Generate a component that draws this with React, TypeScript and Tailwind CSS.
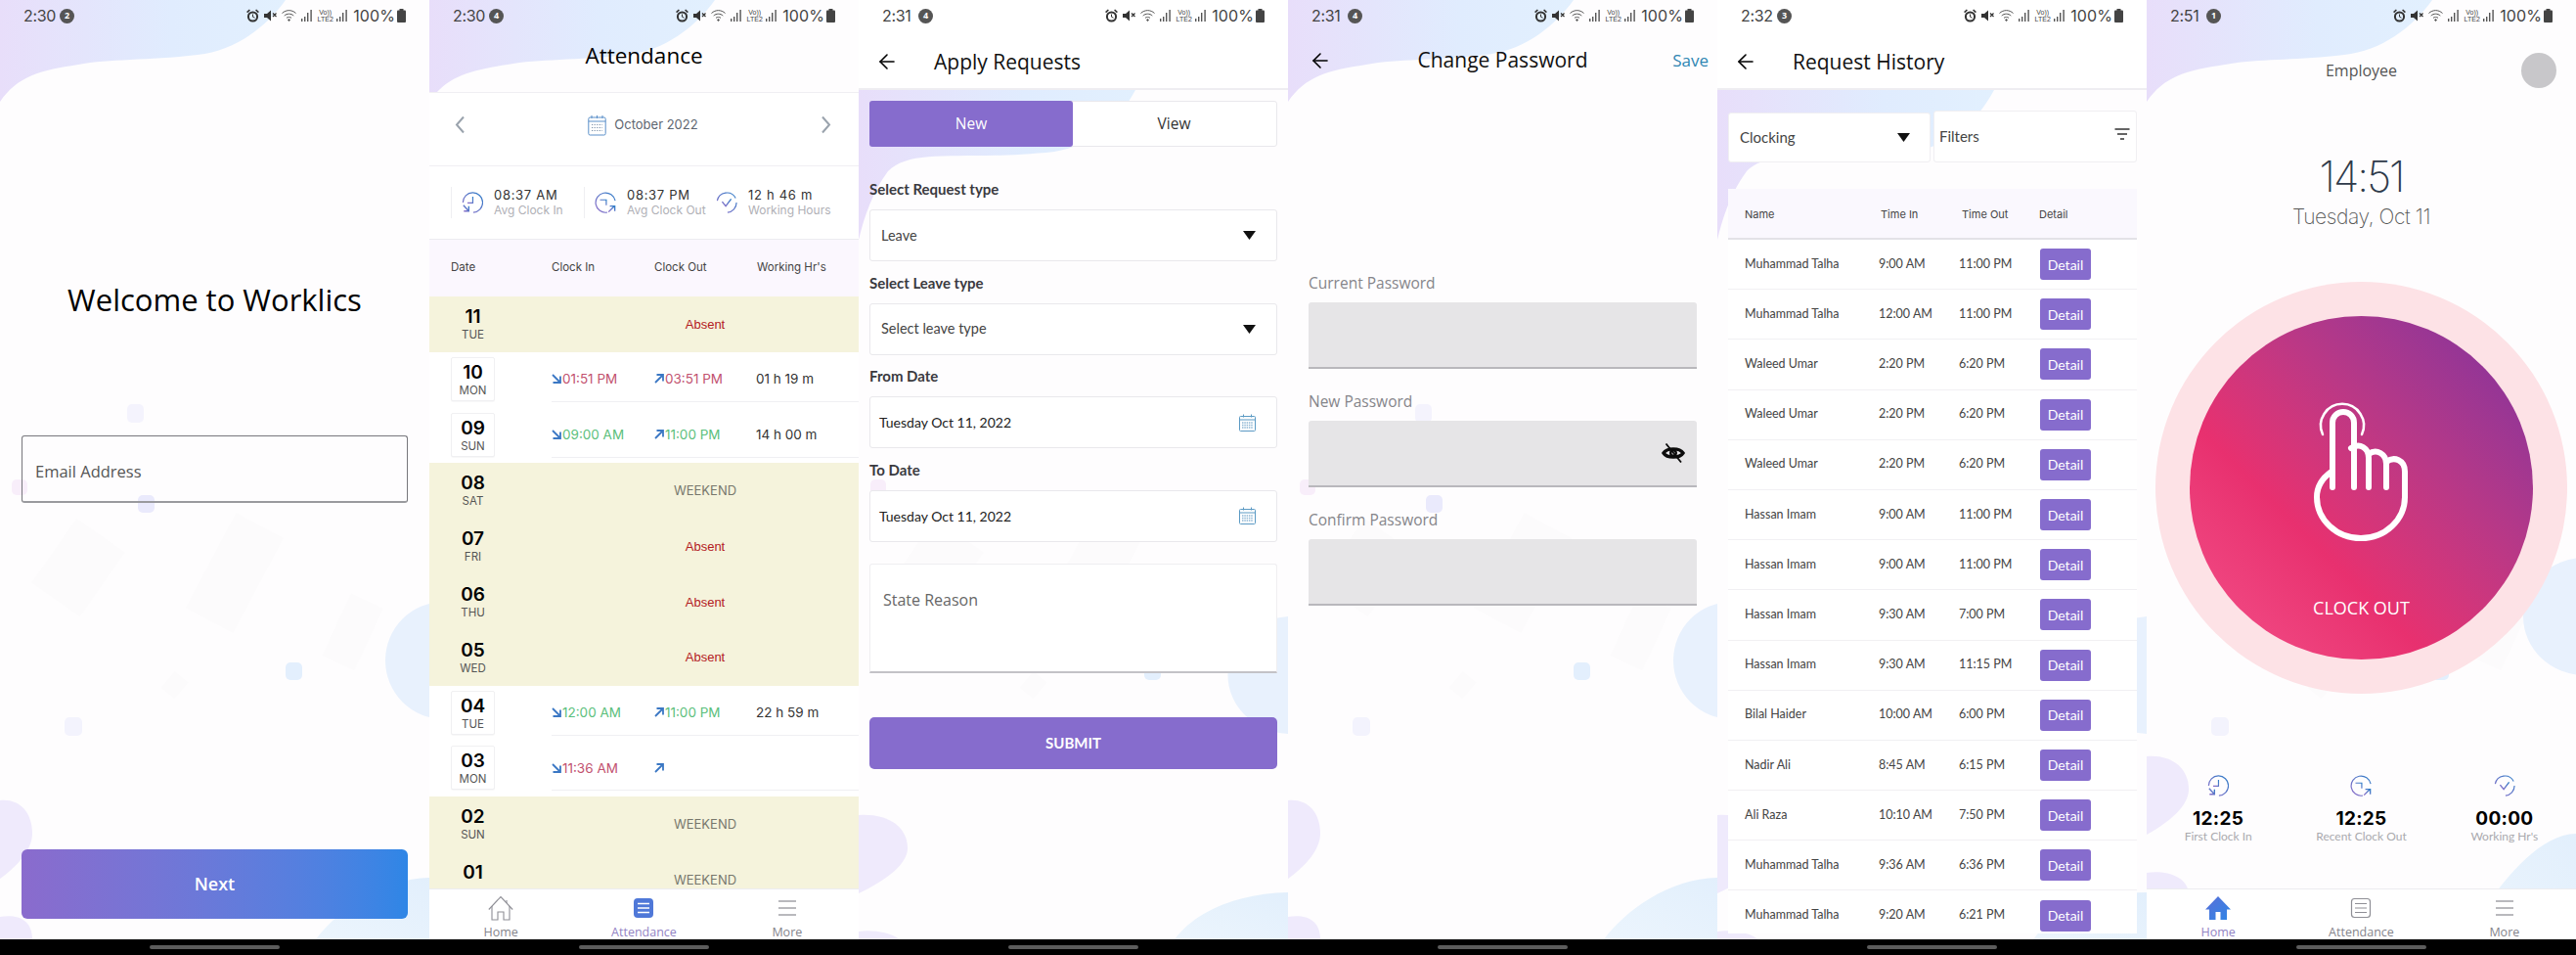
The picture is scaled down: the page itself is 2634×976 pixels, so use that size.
import React from 'react';
import { ArrowLeft } from 'lucide-react';

const OPEN = "font-['Open_Sans',sans-serif]";
const MONT = "font-['Inter',sans-serif]";
const LATO = "font-['Lato',sans-serif]";

// backdrop art behind every screen, shapes differ a little between screens
const Backdrop: React.FC<{ under?: boolean; dy?: number; cx?: number; blobX?: number }> = ({ under = false, dy = 0, cx = 0, blobX = 33 }) => (
  <svg className="absolute inset-0" width="439" height="960" viewBox="0 0 439 960">
    <defs>
      <linearGradient id="blobTop" x1="0" y1="0" x2="1" y2="0">
        <stop offset="0" stopColor="#e8defa" />
        <stop offset="0.6" stopColor="#e0ecfe" />
        <stop offset="1" stopColor="#e2f0fe" />
      </linearGradient>
      <linearGradient id="blobBR" x1="0" y1="1" x2="1" y2="0">
        <stop offset="0" stopColor="#ecf5fd" />
        <stop offset="1" stopColor="#e2effc" />
      </linearGradient>
    </defs>
    {under ? (
      <path d="M0 92 H283 C265 125 240 148 200 155 C110 165 55 150 30 175 C15 195 6 220 0 245 Z" fill="url(#blobTop)" />
    ) : (
      <path d="M0 0 H292 C272 28 240 52 202 56 C150 62 112 60 80 66 C40 72 18 78 0 104 Z" fill="url(#blobTop)" />
    )}
    <g fill="#fcfbfc">
      <rect x="50" y="540" width="60" height="80" transform="rotate(35 80 580)" />
      <rect x="215" y="530" width="55" height="110" transform="rotate(28 240 580)" />
      <rect x="345" y="610" width="36" height="70" transform="rotate(25 360 640)" />
      <rect x="170" y="690" width="18" height="22" transform="rotate(40 180 700)" />
    </g>
    <rect x="130" y="413" width="17" height="19" rx="5" fill="#f4f3fd" />
    <rect x="141" y="506" width="17" height="18" rx="5" fill="#eaeafc" />
    <rect x="292" y={677} width="17" height="18" rx="5" fill="#e3effd" />
    <rect x="66" y="733" width="18" height="19" rx="5" fill="#f3f3fd" />
    <rect x="12" y="490" width="16" height="16" rx="5" fill="#f8eefa" />
    <ellipse cx={454 - cx} cy={675 + dy} rx={60 + cx / 2} ry="60" fill="#e8f1fd" />
    <path d={`M0 ${818 + dy} C${blobX * 0.6} ${816 + dy} ${blobX} ${830 + dy} ${blobX} ${852 + dy} C${blobX} ${868 + dy} ${blobX * 0.55} ${885 + dy} 0 ${898 + dy} Z`} fill="#efeafc" />
    <path d={`M0 ${937 + dy} C18 ${934 + dy} ${blobX} ${940 + dy} ${blobX} ${960 + dy} L${blobX} 960 H0 Z`} fill="#efeafc" />
    <path d={`M323 960 C345 930 390 ${898 + dy} 439 ${897 + dy} V960 Z`} fill="url(#blobBR)" />
  </svg>
);

const Shot: React.FC<{ bg?: React.ReactNode; children: React.ReactNode }> = ({ bg, children }) => (
  <div className="w-[439px] h-[976px] flex flex-col bg-black overflow-hidden shrink-0">
    <div className="relative h-[960px] bg-[#fefdfe] overflow-hidden">
      {bg ?? <Backdrop />}
      <div className="relative h-full flex flex-col">{children}</div>
    </div>
    <div className="h-[16px] flex items-center justify-center">
      <div className="w-[133px] h-[4px] rounded-full bg-[#5c5c5c]" />
    </div>
  </div>
);

const Bars = () => (
  <svg width="12" height="14" viewBox="0 0 12 14" fill="#555">
    <rect x="0" y="10" width="1.4" height="3" />
    <rect x="3" y="8" width="1.4" height="5" />
    <rect x="6" y="4" width="1.4" height="9" />
    <rect x="9.4" y="1" width="1.4" height="12" />
  </svg>
);

const StatusBar: React.FC<{ time: string; badge: string }> = ({ time, badge }) => (
  <div className="h-[32px] shrink-0 flex items-center justify-between pl-[24px] pr-[24px] text-[#444]">
    <div className="flex items-center gap-[6px]">
      <span className={`${MONT} text-[16px] w-[31px] tracking-[-0.3px]`}>{time}</span>
      <span className="w-[15px] h-[15px] rounded-full bg-[#555] text-white text-[9px] font-bold flex items-center justify-center">{badge}</span>
    </div>
    <div className="flex items-center">
      <svg width="13" height="14" viewBox="0 0 13 14" fill="#333">
        <circle cx="6.5" cy="8" r="4.6" fill="none" stroke="#333" strokeWidth="2" />
        <path d="M0.6 3.6L3.4 1M12.4 3.6L9.6 1" stroke="#333" strokeWidth="1.6" />
        <path d="M6.5 5.5V8.2L8.5 9.2" stroke="#333" strokeWidth="1" fill="none" />
      </svg>
      <svg className="ml-[5px]" width="13" height="14" viewBox="0 0 13 14" fill="#333">
        <path d="M0 5H3L7 1.5V12.5L3 9H0Z" />
        <path d="M9 4.5L12.5 8M12.5 4.5L9 8" stroke="#333" strokeWidth="1.2" />
      </svg>
      <svg className="ml-[5px]" width="16" height="14" viewBox="0 0 16 14" fill="none" stroke="#555" strokeWidth="1">
        <path d="M0.5 4.5C4.5 0.7 10.5 0.7 14.5 4.5" />
        <path d="M2.7 7C5.5 4.6 9.5 4.6 12.3 7" />
        <path d="M5 9.3C6.5 8.2 8.5 8.2 10 9.3" />
        <circle cx="7.5" cy="11.5" r="0.8" fill="#555" />
      </svg>
      <span className="ml-[4px]"><Bars /></span>
      <span className="ml-[5px] w-[15px] flex flex-col items-center text-[7px] leading-[7px] text-[#444] font-['Liberation_Sans',sans-serif]">
        <span>Vo))</span>
        <span>LTE2</span>
      </span>
      <span className="ml-[4px]"><Bars /></span>
      <span className={`${MONT} ml-[5px] text-[16px] tracking-[0.1px]`}>100%</span>
      <svg className="ml-[2px]" width="9" height="14" viewBox="0 0 9 14" fill="#444">
        <rect x="2.5" y="0" width="4" height="2" />
        <rect x="0" y="1.5" width="9" height="12.5" rx="1" />
      </svg>
    </div>
  </div>
);

const ArcGrad = ({ id }: { id: string }) => (
  <defs>
    <linearGradient id={id} x1="0" y1="1" x2="1" y2="0">
      <stop offset="0" stopColor="#8f6cc8" />
      <stop offset="1" stopColor="#2f7fc8" />
    </linearGradient>
  </defs>
);

const ClockInIcon = () => (
  <svg width="22" height="22" viewBox="0 0 24 24" fill="none" stroke="url(#gIn)" strokeWidth="1.3">
    <ArcGrad id="gIn" />
    <path d="M1.5 12A11 11 0 1 1 13 23" />
    <path d="M12.5 5.5V12.5H6.5" />
    <path d="M2 15L8 21.5M8 16V21.5H2.5" strokeWidth="1.5" />
  </svg>
);

const ClockOutIcon = () => (
  <svg width="22" height="22" viewBox="0 0 24 24" fill="none" stroke="url(#gOut)" strokeWidth="1.3">
    <ArcGrad id="gOut" />
    <path d="M23 10A11 11 0 1 0 14 23" />
    <path d="M6 9H13V15" />
    <path d="M15.5 22.5L22 16M17 16H22.5V21.5" strokeWidth="1.5" />
  </svg>
);

const CheckIcon = () => (
  <svg width="22" height="22" viewBox="0 0 24 24" fill="none" stroke="url(#gChk)" strokeWidth="1.3">
    <ArcGrad id="gChk" />
    <path d="M1.5 10A11 11 0 0 1 22 7M23 12A11 11 0 0 1 13 23" />
    <path d="M7 11L11 16L17 8" strokeWidth="1.5" />
  </svg>
);

const HomeOutline = () => (
  <svg width="26" height="26" viewBox="0 0 26 26" fill="none" stroke="#8f8f96" strokeWidth="1.1">
    <path d="M0.8 14.5L13 1.5L25.2 14.5" />
    <path d="M4 11V25H10V17H16V25H22V11" />
    <path d="M19 5V8" />
  </svg>
);

const HomeFilled = () => (
  <svg width="26" height="26" viewBox="0 0 26 26">
    <defs>
      <linearGradient id="gHome" x1="0" y1="0" x2="1" y2="1">
        <stop offset="0" stopColor="#5b6fd8" />
        <stop offset="1" stopColor="#2e86e6" />
      </linearGradient>
    </defs>
    <path d="M13 1L26 14.5H22V25H15.5V17H10.5V25H4V14.5H0Z" fill="url(#gHome)" />
  </svg>
);

const DocIcon: React.FC<{ active?: boolean }> = ({ active }) => (
  <svg width="26" height="26" viewBox="0 0 26 26" fill="none">
    {active ? (
      <>
        <rect x="3" y="3" width="20" height="20" rx="4" fill="#4f78d8" />
        <path d="M7 8.5H19M7 13H19M7 17.5H19" stroke="#fff" strokeWidth="1.6" />
      </>
    ) : (
      <>
        <rect x="3.5" y="3.5" width="19" height="19" rx="3" stroke="#8f8f96" strokeWidth="1.2" />
        <path d="M7 8.5H19M7 13H19M7 17.5H19" stroke="#8f8f96" strokeWidth="1.1" />
      </>
    )}
  </svg>
);

const MenuIcon = () => (
  <svg width="26" height="26" viewBox="0 0 26 26" fill="none" stroke="#a3a3a8" strokeWidth="1.3">
    <path d="M4 6H22M4 13H22M4 20H22" />
  </svg>
);

const BottomNav: React.FC<{ active: 'home' | 'attendance' }> = ({ active }) => (
  <div className="mt-auto h-[52px] shrink-0 grid grid-cols-3 bg-white border-t border-[#ececf0] pt-[6px] relative">
    {[
      { key: 'home', label: 'Home', icon: active === 'home' ? <HomeFilled /> : <HomeOutline /> },
      { key: 'attendance', label: 'Attendance', icon: <DocIcon active={active === 'attendance'} /> },
      { key: 'more', label: 'More', icon: <MenuIcon /> },
    ].map((item) => (
      <div key={item.key} className="flex flex-col items-center">
        {item.icon}
        <span className={`${OPEN} mt-[5px] text-[12.5px] leading-[14px] ${item.key === active ? 'text-[#9384c4]' : 'text-[#85858c]'}`}>
          {item.label}
        </span>
      </div>
    ))}
  </div>
);

const CornerArrow: React.FC<{ out?: boolean }> = ({ out }) => (
  <svg className="mr-[1px]" width="10" height="10" viewBox="0 0 10 10" fill="none" stroke="#3b78c4" strokeWidth="1.8">
    {out ? <path d="M1 9L8.5 1.5M2.5 1H9V7.5" /> : <path d="M1 1L8.5 8.5M1.5 9H9V2.5" />}
  </svg>
);

type DayRow = { d: string; w: string; note?: string; tin?: string; tout?: string; hrs?: string; tone?: string };

const DAYS: DayRow[] = [
  { d: '11', w: 'TUE', note: 'Absent' },
  { d: '10', w: 'MON', tin: '01:51 PM', tout: '03:51 PM', hrs: '01 h 19 m', tone: 'red' },
  { d: '09', w: 'SUN', tin: '09:00 AM', tout: '11:00 PM', hrs: '14 h 00 m', tone: 'green' },
  { d: '08', w: 'SAT', note: 'WEEKEND' },
  { d: '07', w: 'FRI', note: 'Absent' },
  { d: '06', w: 'THU', note: 'Absent' },
  { d: '05', w: 'WED', note: 'Absent' },
  { d: '04', w: 'TUE', tin: '12:00 AM', tout: '11:00 PM', hrs: '22 h 59 m', tone: 'green' },
  { d: '03', w: 'MON', tin: '11:36 AM', tout: '', hrs: '', tone: 'red' },
  { d: '02', w: 'SUN', note: 'WEEKEND' },
  { d: '01', w: '', note: 'WEEKEND' }, // day label sits behind the tab bar
];

const DayCell: React.FC<{ row: DayRow; boxed?: boolean }> = ({ row, boxed }) => (
  <div className={`w-[45px] h-[45px] flex flex-col items-center justify-start pt-[4px] ${boxed ? 'bg-white border border-[#f0f0f2] rounded-[2px] shadow-[0_1px_1px_rgba(0,0,0,0.03)]' : ''}`}>
    <span className={`${MONT} text-[19px] leading-[22px] font-semibold text-black`}>{row.d}</span>
    <span className={`${MONT} text-[11.5px] leading-[15px] text-[#555]`}>{row.w}</span>
  </div>
);

const AttendanceRow: React.FC<{ row: DayRow }> = ({ row }) => {
  if (row.note) {
    return (
      <div className="h-[56.8px] flex items-center bg-[#f5f3dc] pl-[22px]">
        <div className="w-[103px]"><DayCell row={row} /></div>
        <div className={`flex-1 text-center text-[13px] ${row.note === 'Absent' ? "text-[#b3201f] font-['Liberation_Sans',sans-serif]" : `text-[#77776c] ${MONT}`}`}>
          {row.note}
        </div>
      </div>
    );
  }
  const tone = row.tone === 'red' ? 'text-[#c2526f]' : 'text-[#5cc07c]';
  return (
    <div className="h-[56.8px] flex items-start bg-white pl-[22px] pt-[5px]">
      <div className="w-[103px]"><DayCell row={row} boxed /></div>
      <div className={`${MONT} flex-1 h-[46px] flex items-center border-b border-[#f0f0f3] text-[13.5px]`}>
        <span className={`w-[105px] flex items-center ${tone}`}><CornerArrow />{row.tin}</span>
        <span className={`w-[104px] flex items-center ${tone}`}><CornerArrow out />{row.tout}</span>
        <span className="text-[#333]">{row.hrs}</span>
      </div>
    </div>
  );
};

const AttendanceStat: React.FC<{ icon: React.ReactNode; value: string; label: string; className: string }> = ({ icon, value, label, className }) => (
  <div className={`flex items-center ${className}`}>
    {icon}
    <div className={`${MONT} ml-[11px]`}>
      <div className="text-[13px] leading-[16px] tracking-[0.7px] text-[#333]">{value}</div>
      <div className="text-[12px] leading-[16px] text-[#b0b0b6]">{label}</div>
    </div>
  </div>
);

const MonthIcon = () => (
  <svg width="19" height="22" viewBox="0 0 19 22" fill="none" stroke="#5a8fc9" strokeWidth="1">
    <rect x="0.8" y="3" width="17.4" height="18" rx="1.5" />
    <path d="M0.8 7H18.2M4 1V4M9.5 1V4M15 1V4" />
    <path d="M4 10.5H15M4 13.5H15M4 16.5H15" strokeDasharray="1.2 1.4" stroke="#7a8fa8" />
  </svg>
);

const AttendanceScreen = () => (
  <Shot>
    <StatusBar time="2:30" badge="4" />
    <div className={`${OPEN} h-[62px] shrink-0 flex items-center justify-center pb-[12px] text-[22.5px] text-black`}>Attendance</div>
    <div className="relative h-[76px] shrink-0 bg-white border-y border-[#f0eff3] flex justify-between pl-[26px] pr-[28px] pt-[22px]">
      <svg className="mt-[1px]" width="11" height="19" viewBox="0 0 11 19" fill="none" stroke="#9aa3ad" strokeWidth="2"><path d="M9 1.5L2 9.5L9 17.5" /></svg>
      <div className="flex items-start gap-[8px]">
        <MonthIcon />
        <span className={`${MONT} text-[13px] leading-[20px] text-[#5d6570]`}>October 2022</span>
      </div>
      <svg className="mt-[1px]" width="11" height="19" viewBox="0 0 11 19" fill="none" stroke="#9aa3ad" strokeWidth="2"><path d="M2 1.5L9 9.5L2 17.5" /></svg>
    </div>
    <div className="h-[75px] shrink-0 bg-white border-b border-[#ececf0] flex items-center pl-[22px]">
      <AttendanceStat className="w-[136px] border-l border-[#efeff2] pl-[10px]" icon={<ClockInIcon />} value="08:37 AM" label="Avg Clock In" />
      <AttendanceStat className="w-[125px] border-l border-[#efeff2] pl-[10px]" icon={<ClockOutIcon />} value="08:37 PM" label="Avg Clock Out" />
      <AttendanceStat className="pl-[10px]" icon={<CheckIcon />} value="12 h 46 m" label="Working Hours" />
    </div>
    <div className={`${MONT} h-[58px] shrink-0 bg-[#fbf7fe] flex items-center pl-[22px] text-[11.5px] text-[#444]`}>
      <span className="w-[103px]">Date</span>
      <span className="w-[105px]">Clock In</span>
      <span className="w-[105px]">Clock Out</span>
      <span>Working Hr's</span>
    </div>
    <div className="flex-1 min-h-0 overflow-hidden">
      {DAYS.map((row) => <AttendanceRow key={row.d} row={row} />)}
    </div>
    <BottomNav active="attendance" />
  </Shot>
);

const LoginScreen = () => (
  <Shot>
    <StatusBar time="2:30" badge="2" />
    <h1 className={`${OPEN} mt-[252px] text-center text-[31px] leading-[44px] text-black`}>Welcome to Worklics</h1>
    <div className="mx-[22px] mt-[117px] h-[69px] border border-[#77777c] border-b-2 border-b-[#9a9a9e] rounded-[3px] flex items-center pl-[13px] pt-[6px]">
      <span className={`${OPEN} text-[16.5px] text-[#555]`}>Email Address</span>
    </div>
    <button className={`${OPEN} mx-[22px] mt-[354px] h-[71px] rounded-[6px] bg-gradient-to-r from-[#8a6bcd] to-[#2e86e6] text-white text-[18px] font-semibold`}>
      Next
    </button>
  </Shot>
);

const Caret = () => (
  <svg width="13" height="9" viewBox="0 0 13 9" fill="#111"><path d="M0 0H13L6.5 9Z" /></svg>
);

const FormCalendar = () => (
  <svg width="17" height="18" viewBox="0 0 17 18" fill="none" stroke="#5b9ac4" strokeWidth="1">
    <rect x="0.5" y="2.5" width="16" height="15" rx="1" />
    <path d="M0.5 6H16.5M4.5 0.5V3.5M12.5 0.5V3.5" />
    <path d="M3 9H14M3 11.5H14M3 14H14" strokeWidth="1.4" strokeDasharray="1.5 0.8" stroke="#8fb7d4" />
  </svg>
);

const Field: React.FC<{ label: string; first?: boolean; children: React.ReactNode }> = ({ label, first, children }) => (
  <>
    <div className={`${LATO} ${first ? 'mt-[34px]' : 'mt-[12.6px]'} h-[20px] text-[15px] leading-[18px] font-bold text-[#3a3a3f]`}>{label}</div>
    <div className="mt-[10px] h-[53px] bg-white border border-[#e9e8ec] rounded-[3px] flex items-center justify-between pl-[11px] pr-[21px]">
      {children}
    </div>
  </>
);

const ScreenHeader: React.FC<{ time: string; badge: string; title: string }> = ({ time, badge, title }) => (
  <div className="h-[92px] shrink-0 bg-white border-b-2 border-[#eeedf1]">
    <StatusBar time={time} badge={badge} />
    <div className="flex items-center pl-[17px] mt-[19px]">
      <ArrowLeft size={24} strokeWidth={1.6} className="text-black" />
      <span className={`${OPEN} ml-[36px] text-[21px] leading-[24px] text-[#111]`}>{title}</span>
    </div>
  </div>
);

const RequestsScreen = () => (
  <Shot bg={<Backdrop under dy={15} cx={11} blobX={50} />}>
    <ScreenHeader time="2:31" badge="4" title="Apply Requests" />
    <div className="px-[11px]">
      <div className={`${OPEN} mt-[11px] h-[47px] flex bg-white border border-[#e9e8ec] rounded-[3px] text-[15.5px]`}>
        <div className="w-[208px] -m-px bg-[#866ccd] text-white rounded-[3px] flex items-center justify-center">New</div>
        <div className="flex-1 flex items-center justify-center text-[#333]">View</div>
      </div>
      <Field label="Select Request type" first>
        <span className={`${LATO} text-[14.5px] text-[#444]`}>Leave</span>
        <Caret />
      </Field>
      <Field label="Select Leave type">
        <span className={`${LATO} text-[14.5px] text-[#444]`}>Select leave type</span>
        <Caret />
      </Field>
      <Field label="From Date">
        <span className={`${LATO} -ml-[2px] text-[14px] text-[#222]`}>Tuesday Oct 11, 2022</span>
        <FormCalendar />
      </Field>
      <Field label="To Date">
        <span className={`${LATO} -ml-[2px] text-[14px] text-[#222]`}>Tuesday Oct 11, 2022</span>
        <FormCalendar />
      </Field>
      <div className="mt-[22px] h-[112px] bg-white border border-[#efeef1] border-b-2 border-b-[#c3c2c7] rounded-t-[3px] pl-[13px] pt-[24px]">
        <span className={`${OPEN} text-[16px] leading-[24px] text-[#666]`}>State Reason</span>
      </div>
      <button className={`${LATO} mt-[45px] w-full h-[53px] rounded-[5px] bg-[#866ccd] text-white text-[15px] font-bold`}>SUBMIT</button>
    </div>
  </Shot>
);

const PasswordField: React.FC<{ label: string; className: string; eye?: boolean }> = ({ label, className, eye }) => (
  <>
    <div className={`${OPEN} ${className} h-[24px] text-[15.5px] leading-[24px] text-[#85858a]`}>{label}</div>
    <div className="mt-[8px] h-[68px] bg-[#e6e5e7] border-b-2 border-[#b9b8bc] rounded-t-[3px] flex items-center justify-end pr-[12px]">
      {eye && (
        <svg width="24" height="20" viewBox="0 0 24 20" fill="none" stroke="#0c0c0c">
          <path d="M2 10C5.5 4.5 18.5 4.5 22 10C18.5 15.5 5.5 15.5 2 10Z" strokeWidth="3.4" />
          <circle cx="12" cy="10" r="2.8" strokeWidth="2.4" />
          <path d="M4.5 0.5L20 19.5" strokeWidth="1.8" />
        </svg>
      )}
    </div>
  </>
);

const PasswordScreen = () => (
  <Shot>
    <StatusBar time="2:31" badge="4" />
    <div className="h-[60px] shrink-0 grid grid-cols-[1fr_auto_1fr] items-center">
      <ArrowLeft size={24} strokeWidth={1.6} className="ml-[21px] text-black" />
      <span className={`${OPEN} text-[21px] text-[#111]`}>Change Password</span>
      <span className={`${OPEN} justify-self-end pr-[9px] text-[17px] text-[#2f86b3]`}>Save</span>
    </div>
    <div className="px-[21px]">
      <PasswordField label="Current Password" className="mt-[185px]" />
      <PasswordField label="New Password" className="mt-[21px]" eye />
      <PasswordField label="Confirm Password" className="mt-[21px]" />
    </div>
  </Shot>
);

const REQUESTS = [
  ['Muhammad Talha', '9:00 AM', '11:00 PM'],
  ['Muhammad Talha', '12:00 AM', '11:00 PM'],
  ['Waleed Umar', '2:20 PM', '6:20 PM'],
  ['Waleed Umar', '2:20 PM', '6:20 PM'],
  ['Waleed Umar', '2:20 PM', '6:20 PM'],
  ['Hassan Imam', '9:00 AM', '11:00 PM'],
  ['Hassan Imam', '9:00 AM', '11:00 PM'],
  ['Hassan Imam', '9:30 AM', '7:00 PM'],
  ['Hassan Imam', '9:30 AM', '11:15 PM'],
  ['Bilal Haider', '10:00 AM', '6:00 PM'],
  ['Nadir Ali', '8:45 AM', '6:15 PM'],
  ['Ali Raza', '10:10 AM', '7:50 PM'],
  ['Muhammad Talha', '9:36 AM', '6:36 PM'],
  ['Muhammad Talha', '9:20 AM', '6:21 PM'],
];

const HistoryScreen = () => (
  <Shot bg={<Backdrop under dy={15} cx={11} blobX={50} />}>
    <ScreenHeader time="2:32" badge="3" title="Request History" />
    <div className="pl-[11px] pr-[10px]">
      <div className="flex items-end gap-[3px] mt-[21px]">
        <div className="w-[207px] h-[51px] bg-white border border-[#f0eff2] rounded-[3px] flex items-center justify-between pl-[11px] pr-[20px]">
          <span className={`${LATO} text-[15px] text-[#444]`}>Clocking</span>
          <Caret />
        </div>
        <div className="flex-1 h-[53px] bg-white border border-[#f0eff2] rounded-[3px] flex items-center justify-between pl-[5px] pr-[6px]">
          <span className={`${LATO} text-[15px] text-[#444]`}>Filters</span>
          <svg className="mb-[6px]" width="16" height="14" viewBox="0 0 16 14" fill="none" stroke="#333" strokeWidth="1.4">
            <path d="M0.5 2H15.5M3 7H13M6 12H10" />
          </svg>
        </div>
      </div>
      <div className="mt-[27px] h-[761px] overflow-hidden bg-white">
        <div className={`${MONT} h-[52px] pt-[2px] bg-[#faf8fe] border-b-2 border-[#e3e2e7] flex items-center text-[11px] text-[#444]`}>
          <span className="w-[156px] pl-[17px]">Name</span>
          <span className="w-[83px]">Time In</span>
          <span className="w-[79px]">Time Out</span>
          <span>Detail</span>
        </div>
        {REQUESTS.map((row, i) => (
          <div key={i} className={`${LATO} h-[51.2px] flex items-center border-b border-[#f1f0f3] text-[12.5px] text-[#444]`}>
            <span className="w-[154px] pl-[17px]">{row[0]}</span>
            <span className="w-[82px]">{row[1]}</span>
            <span className="w-[83px]">{row[2]}</span>
            <span className="w-[52px] h-[32px] rounded-[3px] bg-[#866ccd] text-white text-[14px] flex items-center justify-center">Detail</span>
          </div>
        ))}
      </div>
    </div>
  </Shot>
);

const TapHand = () => (
  <svg className="mt-[67px]" width="170" height="180" viewBox="0 0 170 180" fill="none" stroke="#fff" strokeLinecap="round" strokeLinejoin="round">
    <path d="M45 54A22 22 0 1 1 85 54" strokeWidth="2.5" />
    <path d="M55 108V42A11 11 0 0 1 77 42V108" strokeWidth="6" />
    <path d="M74 68C83 62 92 68 92 78V108" strokeWidth="6" />
    <path d="M92 74C100 68 110 74 110 84V108" strokeWidth="6" />
    <path d="M110 82C118 76 129 80 129 92V118A45 42 0 0 1 39 118C39 108 44 99 54 92" strokeWidth="6" />
  </svg>
);

const HomeScreen = () => (
  <Shot bg={<Backdrop dy={-45} cx={6} blobX={43} />}>
    <StatusBar time="2:51" badge="1" />
    <div className="mt-[22px] h-[36px] shrink-0 grid grid-cols-[1fr_auto_1fr] items-center">
      <span />
      <span className={`${OPEN} text-[16px] text-[#555]`}>Employee</span>
      <span className="justify-self-end mr-[20px] w-[36px] h-[36px] rounded-full bg-[#c8c7ca]" />
    </div>
    <div className={`${MONT} mt-[66px] text-center text-[43px] leading-[48px] font-extralight tracking-[-2px] text-[#2f3a4a]`}>14:51</div>
    <div className={`${MONT} mt-[4px] text-center text-[21px] leading-[28px] font-extralight tracking-[-0.4px] text-[#555]`}>Tuesday, Oct 11</div>
    <div className="mt-[52px] mx-auto w-[421px] h-[421px] shrink-0 rounded-full bg-[#fde2e6] flex items-center justify-center">
      <div className="w-[351px] h-[351px] rounded-full bg-gradient-to-tr from-[#f4508a] via-[#e8306f] via-35% to-[#7e2f9e] flex flex-col items-center">
        <TapHand />
        <span className={`${OPEN} mt-[39px] text-[18px] leading-[24px] text-white`}>CLOCK OUT</span>
      </div>
    </div>
    <div className="mt-[83px] grid grid-cols-3">
      {[
        { icon: <ClockInIcon />, value: '12:25', label: 'First Clock In' },
        { icon: <ClockOutIcon />, value: '12:25', label: 'Recent Clock Out' },
        { icon: <CheckIcon />, value: '00:00', label: "Working Hr's" },
      ].map((s) => (
        <div key={s.label} className="flex flex-col items-center">
          {s.icon}
          <span className={`${MONT} mt-[11px] text-[19px] leading-[24px] font-bold tracking-[0.3px] text-black`}>{s.value}</span>
          <span className={`${LATO} -mt-[2px] text-[12px] leading-[16px] text-[#aaaaae]`}>{s.label}</span>
        </div>
      ))}
    </div>
    <BottomNav active="home" />
  </Shot>
);

export default function App() {
  return (
    <div className={`${OPEN} flex w-[2634px] h-[976px] overflow-hidden`}>
      <LoginScreen />
      <AttendanceScreen />
      <RequestsScreen />
      <PasswordScreen />
      <HistoryScreen />
      <HomeScreen />
    </div>
  );
}
